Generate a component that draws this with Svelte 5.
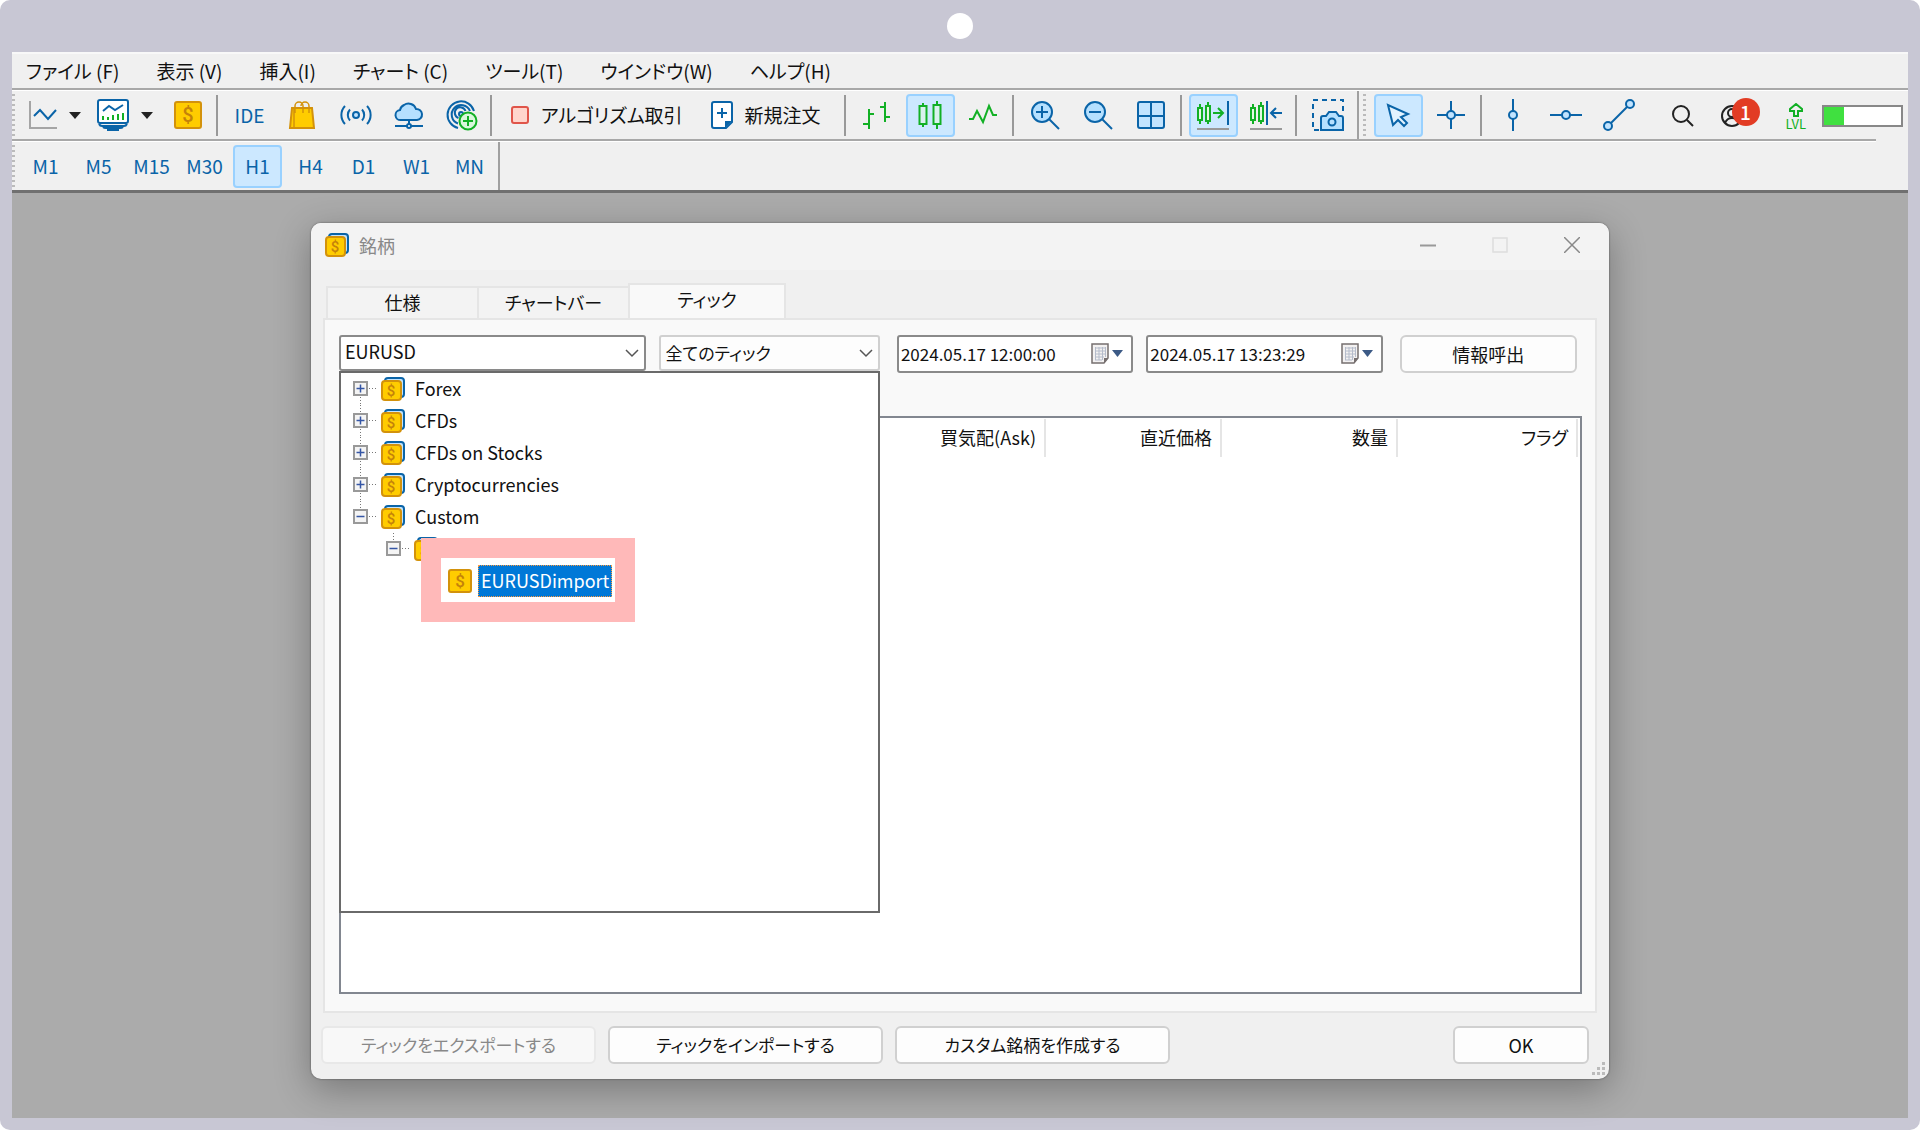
<script>
	// --- Menus and toolbars ---
	const menus = [
		'ファイル (F)',
		'表示 (V)',
		'挿入(I)',
		'チャート (C)',
		'ツール(T)',
		'ウインドウ(W)',
		'ヘルプ(H)'
	];

	const services = [
		{ icon: 'bag', label: 'Market' },
		{ icon: 'signal', label: 'Signals' },
		{ icon: 'cloud', label: 'VPS' },
		{ icon: 'radar', label: 'Copy' }
	];

	const chartGroups = [
		[
			{ icon: 'bars', label: 'Bar chart' },
			{ icon: 'candles', label: 'Candlesticks', active: true },
			{ icon: 'line', label: 'Line chart' }
		],
		[
			{ icon: 'zoomin', label: 'Zoom in' },
			{ icon: 'zoomout', label: 'Zoom out' },
			{ icon: 'tile', label: 'Tile windows' }
		],
		[
			{ icon: 'scroll', label: 'Auto scroll', active: true },
			{ icon: 'shift', label: 'Chart shift' }
		],
		[{ icon: 'camera', label: 'Screenshot' }]
	];

	const pointers = [
		{ icon: 'cursor', label: 'Cursor', active: true },
		{ icon: 'cross', label: 'Crosshair' }
	];

	const lines = [
		{ icon: 'vline', label: 'Vertical line' },
		{ icon: 'hline', label: 'Horizontal line' },
		{ icon: 'trend', label: 'Trend line' }
	];

	const periods = ['M1', 'M5', 'M15', 'M30', 'H1', 'H4', 'D1', 'W1', 'MN'];
	let period = 'H1';
	const level = 26;

	// --- Symbols dialog ---
	const tabs = ['仕様', 'チャートバー', 'ティック'];
	let tab = 'ティック';

	const tree = ['Forex', 'CFDs', 'CFDs on Stocks', 'Cryptocurrencies'];
	const columns = ['買気配(Ask)', '直近価格', '数量', 'フラグ'];

	let from = '2024.05.17 12:00:00';
	let to = '2024.05.17 13:23:29';
</script>

{#snippet coin()}
	<svg class="coin" width="24" height="24" viewBox="0 0 24 24">
		<rect x="1" y="1" width="22" height="22" rx="2" fill="#fc0" stroke="#d3920b" stroke-width="2" />
		<text x="12" y="18" text-anchor="middle" font-size="17">$</text>
	</svg>
{/snippet}

{#snippet coins()}
	<svg class="coin" width="24" height="24" viewBox="0 0 24 24">
		<rect x="4" y="1" width="19" height="19" rx="3" fill="#c2e4ff" stroke="#0a64a8" stroke-width="2" />
		<rect x="1" y="4" width="19" height="19" rx="3" fill="#fc0" stroke="#d3920b" stroke-width="2" />
		<text x="10" y="19" text-anchor="middle" font-size="15">$</text>
	</svg>
{/snippet}

{#snippet caret()}
	<svg width="12" height="7" viewBox="0 0 12 7"><path d="M0 0h12L6 7z" fill="#222" /></svg>
{/snippet}

{#snippet chevron()}
	<svg class="chevron" width="14" height="9" viewBox="0 0 14 9">
		<path d="M1 1l6 6 6-6" fill="none" stroke="#555" stroke-width="1.5" />
	</svg>
{/snippet}

{#snippet calendar()}
	<svg width="32" height="24" viewBox="0 0 32 24">
		<path d="M1 2h16v14l-4 5H1z" fill="#f3f1f1" stroke="#766f6f" stroke-width="1.5" />
		<path d="M4 6h11M4 9h11M4 12h11M4 15h9M4 18h7M4.500 5v13M8 5v13M11.500 5v13M14.500 5v10" stroke="#b5bccb" />
		<path d="M17 16h-4v5z" fill="#766f6f" />
		<path d="M21 8h11l-5.500 7z" fill="#3c5a86" />
	</svg>
{/snippet}

{#snippet toggle(open)}
	<svg class="toggle" width="26" height="32" viewBox="0 0 26 32">
		<path d="M7.500 0v32M16 15.500h9" stroke="#777" stroke-width="1" stroke-dasharray="1 2" />
		<rect x="1" y="9" width="13" height="13" fill="#f4f4f4" stroke="#999" stroke-width="2" />
		<path d={open ? 'M3.500 15.500h8' : 'M3.500 15.500h8M7.500 11.500v8'} stroke="#3556a5" stroke-width="1.5" />
	</svg>
{/snippet}

{#snippet icon(name)}
	<svg class="icon" width="32" height="32" viewBox="0 0 32 32">
		{#if name === 'bag'}
			<path d="M5 9h20l2 20H3z" fill="#fc0" stroke="#d3920b" stroke-width="2" />
			<path d="M8 14V7a4 4 0 0 1 8 0v7M14 7a4 4 0 0 1 8 0v7M7 10v18" stroke="#d3920b" stroke-width="1.500" />
		{:else if name === 'signal'}
			<circle cx="16" cy="16" r="3" fill="#c2e4ff" />
			<path d="M10 10.500a8 8 0 0 0 0 11M22 10.500a8 8 0 0 1 0 11M5 7a13 13 0 0 0 0 18M27 7a13 13 0 0 1 0 18" />
		{:else if name === 'cloud'}
			<path d="M8 21a5 5 0 0 1-1-10 7 7 0 0 1 4-5 8 8 0 0 1 12 4 5.500 5.500 0 0 1 1 11z" fill="#b5e0ff" />
			<path d="M16 21v5M2 27h28" />
			<circle cx="16" cy="27" r="2" fill="#fff" />
		{:else if name === 'radar'}
			<circle cx="15" cy="15" r="2" fill="#c2e4ff" />
			<path d="M28 12A13.500 13.500 0 1 0 12 29M24 12a9.500 9.500 0 1 0-12 12.500M19.500 12a5.500 5.500 0 1 0-7 7" />
			<circle cx="22" cy="22" r="8.500" class="green" fill="#d9f7dc" />
			<path class="green" d="M17 22h10M22 17v10" />
		{:else if name === 'bars'}
			<path class="green" d="M8 10v20M2 25h6M8 15h5M24 3v20M19 8h5M24 18h5" />
		{:else if name === 'candles'}
			<path class="green" d="M9 4v24M23 2v28" />
			<path class="green" d="M5.500 7h7v18h-7zM19.500 6h7v19h-7z" fill="#d9f2ee" />
		{:else if name === 'line'}
			<path class="green" d="M2 20h4l4-8 6 11 6-16 4 9h4" />
		{:else if name === 'zoomin' || name === 'zoomout'}
			<circle cx="13" cy="13" r="10" fill="#b5e0ff" />
			<path d={name === 'zoomin' ? 'M7 13h12M13 7v12' : 'M7 13h12'} />
			<path d="M20 20l10 10" />
		{:else if name === 'tile'}
			<rect x="3" y="3" width="26" height="26" rx="2" fill="#c2e4ff" />
			<path d="M16 3v26M3 17h26" />
		{:else if name === 'scroll' || name === 'shift'}
			<path class="green" d="M3 5v20M11 3v22" />
			<path class="green" d="M1 9h4v12H1zM9 7h4v15H9z" fill="#e3f8e3" />
			<path d="M0 30h32" stroke="#999" />
			{#if name === 'scroll'}
				<path class="green" d="M16 14h10M21 9l5 5-5 5" />
				<path d="M31 2v24" />
			{:else}
				<path d="M17 2v24M21 14h11M26 9l-5 5 5 5" />
			{/if}
		{:else if name === 'camera'}
			<path d="M31 12V1H1v30h6" stroke-dasharray="5 4" />
			<path d="M9 19q0-2 2-2h3l3-4h7l3 4h2q2 0 2 2v12H9z" fill="#b5e0ff" />
			<circle cx="20" cy="23" r="3.500" />
		{:else if name === 'cursor'}
			<path d="M6 6l5 20 5-5 6 6 3-3-6-6 7-3z" fill="#e3f3ff" />
		{:else if name === 'cross'}
			<path d="M2 16h10M20 16h10M16 2v10M16 20v10" />
			<circle cx="16" cy="16" r="4" fill="#c2e4ff" />
		{:else if name === 'vline'}
			<path d="M16 0v32" />
			<circle cx="16" cy="16" r="4" fill="#c2e4ff" />
		{:else if name === 'hline'}
			<path d="M0 16h32" />
			<circle cx="16" cy="16" r="4" fill="#c2e4ff" />
		{:else if name === 'trend'}
			<path d="M6 26L26 6" />
			<circle cx="5" cy="27" r="4" fill="#c2e4ff" />
			<circle cx="27" cy="5" r="4" fill="#c2e4ff" />
		{/if}
	</svg>
{/snippet}

{#snippet tool(item)}
	<button class="tool" class:active={item.active} aria-label={item.label}>
		{@render icon(item.icon)}
	</button>
{/snippet}

<div class="frame">
	<div class="frame-top"><span class="lens"></span></div>

	<div class="terminal">
		<nav class="menubar">
			{#each menus as menu}
				<button class="menu">{menu}</button>
			{/each}
		</nav>
		<div class="rule"></div>

		<div class="toolbar">
			<span class="grip"></span>
			<button class="drop" aria-label="New chart">
				<svg width="28" height="28" viewBox="0 0 28 28" fill="none" stroke-width="2">
					<path d="M1 0v27h27" stroke="#a5a5a5" />
					<path d="M5 15l6-6 8 9 8-9" stroke="#0a64a8" />
				</svg>
				{@render caret()}
			</button>
			<button class="drop" aria-label="Profiles">
				<svg width="32" height="32" viewBox="0 0 32 32" fill="none" stroke="#0a64a8" stroke-width="2">
					<rect x="1" y="1" width="30" height="23" rx="2" fill="#fff" />
					<path d="M2 25q1 2 3 2h22q2 0 3-2M6 28q1 1 3 1h14q2 0 3-1M10 31h12" />
					<path d="M6 12l6-5 6 4 8-5" />
					<path d="M6 21v-4M11 21v-3M16 21v-5M21 21v-6M26 21v-7" stroke="#12b025" />
				</svg>
				{@render caret()}
			</button>
			<button class="tool" aria-label="Symbols">
				<svg class="coin" width="28" height="28" viewBox="0 0 28 28">
					<rect x="1" y="1" width="26" height="26" rx="2" fill="#fc0" stroke="#d3920b" stroke-width="2" />
					<text x="14" y="21" text-anchor="middle" font-size="20">$</text>
				</svg>
			</button>
			<span class="sep"></span>
			<button class="tool">IDE</button>
			{#each services as item}
				{@render tool(item)}
			{/each}
			<span class="sep"></span>
			<button class="wide">
				<svg width="18" height="18" viewBox="0 0 18 18">
					<rect x="1" y="1" width="16" height="16" rx="2" fill="#ffd5cc" stroke="#e0554a" stroke-width="2" />
				</svg>
				アルゴリズム取引
			</button>
			<button class="wide">
				<svg width="22" height="28" viewBox="0 0 22 28">
					<path d="M3 1h16q2 0 2 2v18l-6 6H3q-2 0-2-2V3q0-2 2-2z" fill="#fff" stroke="#0a64a8" stroke-width="2" />
					<path d="M14 27v-7h7z" fill="#0a64a8" />
					<path d="M11 7v10M6 12h10" stroke="#0a64a8" stroke-width="2" />
				</svg>
				新規注文
			</button>
			{#each chartGroups as group}
				<span class="sep"></span>
				{#each group as item}
					{@render tool(item)}
				{/each}
			{/each}
			<span class="edge"></span>
			<span class="grip"></span>
			{#each pointers as item}
				{@render tool(item)}
			{/each}
			<span class="sep"></span>
			{#each lines as item}
				{@render tool(item)}
			{/each}

			<div class="status">
				<button class="plain" aria-label="Search">
					<svg width="22" height="22" viewBox="0 0 22 22" fill="none" stroke="#222" stroke-width="2">
						<circle cx="9" cy="9" r="8" />
						<path d="M15 15l6 6" />
					</svg>
				</button>
				<button class="plain account" aria-label="Account">
					<svg width="24" height="24" viewBox="0 0 24 24" fill="none" stroke="#222" stroke-width="2">
						<circle cx="12" cy="12" r="10" />
						<circle cx="12" cy="9" r="4" />
						<path d="M5 19q2-5 7-5t7 5" />
					</svg>
					<span class="badge">1</span>
				</button>
				<div class="lvl">
					<svg width="14" height="14" viewBox="0 0 14 14">
						<path d="M5 13V8H1V6l6-5 6 5v2H9v5z" fill="none" stroke="#12b025" stroke-width="2" />
					</svg>
					<span>LVL</span>
				</div>
				<div class="meter"><div class="meter-fill" style="width: {level}%"></div></div>
			</div>
		</div>
		<div class="rule short"></div>

		<div class="periods">
			<span class="grip"></span>
			{#each periods as item}
				<button class="tool" class:active={item === period} onclick={() => (period = item)}>{item}</button>
			{/each}
			<span class="edge"></span>
		</div>

		<main class="desktop">
			<section class="dialog">
				<header class="titlebar">
					{@render coins()}
					<span class="title">銘柄</span>
					<button class="window-button" aria-label="Minimize">
						<svg width="16" height="16" viewBox="0 0 16 16"><path d="M0 8.500h16" stroke="#999" stroke-width="2" /></svg>
					</button>
					<button class="window-button" aria-label="Maximize" disabled>
						<svg width="16" height="16" viewBox="0 0 16 16">
							<rect x="1" y="1" width="14" height="14" fill="none" stroke="#ddd" stroke-width="1.500" />
						</svg>
					</button>
					<button class="window-button" aria-label="Close">
						<svg width="16" height="16" viewBox="0 0 16 16"><path d="M0 0l16 16M16 0L0 16" stroke="#888" stroke-width="1.500" /></svg>
					</button>
				</header>

				<div class="tabs" role="tablist">
					{#each tabs as item}
						<button class="tab" role="tab" aria-selected={item === tab} onclick={() => (tab = item)}>{item}</button>
					{/each}
				</div>

				<div class="panel">
					<div class="controls">
						<div class="combos">
							<div class="combo">
								<select class="dark" aria-label="Symbol"><option>EURUSD</option></select>
								{@render chevron()}
							</div>
							<div class="combo">
								<select aria-label="Tick type"><option>全てのティック</option></select>
								{@render chevron()}
							</div>

							<div class="popup">
								<ul class="tree">
									{#each tree as node}
										<li class="node">{@render toggle(false)}{@render coins()}<span class="name">{node}</span></li>
									{/each}
									<li class="node last">{@render toggle(true)}{@render coins()}<span class="name">Custom</span></li>
									<li class="node level-2 last">{@render toggle(true)}{@render coins()}</li>
									<li class="node level-3">{@render coin()}<span class="name selected">EURUSDimport</span></li>
								</ul>
								<div class="highlight"></div>
							</div>
						</div>
						<div class="dates">
							<div class="date">
								<input type="text" aria-label="From" bind:value={from} />
								<button class="plain" aria-label="Pick start date">{@render calendar()}</button>
							</div>
							<div class="date">
								<input type="text" aria-label="To" bind:value={to} />
								<button class="plain" aria-label="Pick end date">{@render calendar()}</button>
							</div>
						</div>
						<button class="push">情報呼出</button>
					</div>

					<div class="list">
						<table>
							<thead>
								<tr>
									<td></td>
									{#each columns as column}
										<th>{column}</th>
									{/each}
								</tr>
							</thead>
						</table>
					</div>
				</div>

				<footer class="actions">
					<button class="push action" disabled>ティックをエクスポートする</button>
					<button class="push action">ティックをインポートする</button>
					<button class="push action">カスタム銘柄を作成する</button>
					<button class="push ok">OK</button>
				</footer>
				<svg class="resize" width="14" height="14" viewBox="0 0 14 14">
					<path d="M10 0h3v3h-3zM5 5h3v3H5zM10 5h3v3h-3zM0 10h3v3H0zM5 10h3v3H5zM10 10h3v3h-3z" fill="#bbb" />
				</svg>
			</section>
		</main>
	</div>
</div>

<style>
	:global(body) {
		margin: 0;
		background: #fff;
	}

	.frame {
		--blue: #0a64a8;
		--green: #12b025;
		--line: #a0a0a0;
		--face: #f0f0f0;

		box-sizing: border-box;
		min-height: 100vh;
		display: flex;
		flex-direction: column;
		padding: 0 12px 12px;
		border-radius: 10px;
		background: #c8c7d4;
		font-family: 'Noto Sans CJK JP', 'Noto Sans', sans-serif;
		font-feature-settings: 'palt';
		font-size: 18px;
		line-height: 24px;
		color: #111;
	}

	.frame *,
	.frame *::after {
		box-sizing: border-box;
	}

	button,
	select,
	input {
		margin: 0;
		padding: 0;
		border: 0;
		background: none;
		font: inherit;
		font-feature-settings: inherit;
		color: inherit;
	}

	svg {
		display: block;
		flex: none;
	}

	.coin text {
		font-family: Roboto, sans-serif;
		font-weight: 500;
		fill: #c4820a;
	}

	.frame-top {
		height: 52px;
		display: flex;
		justify-content: center;
		align-items: center;
	}

	.lens {
		width: 26px;
		height: 26px;
		border-radius: 50%;
		background: #fff;
	}

	.terminal {
		flex: 1;
		display: flex;
		flex-direction: column;
		background: var(--face);
	}

	/* --- Menu bar --- */
	.menubar {
		height: 36px;
		display: flex;
		align-items: center;
		gap: 37px;
		padding: 0 14px;
		border-top: 2px solid #f8f8f8;
		font-size: 19px;
	}

	.menu {
		white-space: nowrap;
	}

	.rule {
		height: 3px;
		border-top: 2px solid #a8a8a8;
		background: #fff;
	}

	.rule.short {
		margin-right: 32px;
	}

	/* --- Toolbars --- */
	.toolbar,
	.periods {
		height: 48px;
		display: flex;
		align-items: center;
		gap: 4px;
	}

	.toolbar {
		font-size: 19px;
	}

	.grip {
		flex: none;
		width: 3px;
		height: 42px;
		margin-right: 4px;
		background: repeating-linear-gradient(#bbb 0 2px, transparent 2px 5px);
	}

	.periods .grip {
		margin-right: 2px;
	}

	.sep {
		flex: none;
		width: 2px;
		height: 41px;
		margin-right: 3px;
		background: #999;
	}

	.edge {
		flex: none;
		align-self: stretch;
		width: 2px;
		background: var(--line);
	}

	.tool {
		flex: none;
		width: 49px;
		height: 43px;
		display: flex;
		justify-content: center;
		align-items: center;
		border: 2px solid transparent;
		border-radius: 4px;
		font-size: 19px;
		color: var(--blue);
	}

	.tool.active {
		border-color: #99d1ff;
		background: #cce8ff;
	}

	.drop {
		display: flex;
		align-items: center;
		gap: 12px;
		padding: 0 6px;
	}

	.wide {
		min-width: 141px;
		display: flex;
		align-items: center;
		gap: 12px;
		padding: 0 12px;
		white-space: nowrap;
	}

	.icon {
		fill: none;
		stroke: var(--blue);
		stroke-width: 2;
	}

	.green {
		stroke: var(--green);
	}

	.status {
		display: flex;
		align-items: center;
		gap: 26px;
		margin-left: auto;
		padding: 2px 5px 0 0;
	}

	.plain {
		flex: none;
	}

	.account {
		position: relative;
		width: 40px;
	}

	.badge {
		position: absolute;
		top: -6px;
		right: 0;
		width: 28px;
		height: 28px;
		border-radius: 50%;
		background: #e23c24;
		font-weight: 500;
		line-height: 28px;
		color: #fff;
	}

	.lvl {
		display: flex;
		flex-direction: column;
		align-items: center;
		font-size: 13px;
		line-height: 13px;
		color: var(--green);
	}

	.meter {
		width: 81px;
		height: 22px;
		margin-left: -10px;
		border: 2px solid #888;
		background: #fff;
	}

	.meter-fill {
		height: 100%;
		background: #40e040;
	}

	/* --- Dialog --- */
	.desktop {
		flex: 1;
		display: flex;
		padding: 30px 299px 39px;
		border-top: 3px solid #707070;
		background: #ababab;
	}

	.dialog {
		position: relative;
		flex: 1;
		display: flex;
		flex-direction: column;
		padding: 0 12px 15px;
		border-radius: 10px;
		background: var(--face);
		box-shadow:
			0 0 2px rgba(0, 0, 0, 0.5),
			0 10px 36px rgba(0, 0, 0, 0.3);
	}

	.titlebar {
		height: 47px;
		display: flex;
		align-items: center;
		margin: 0 -12px;
		padding: 0 1px 4px 14px;
		border-radius: 10px 10px 0 0;
		background: #f3f3f3;
	}

	.title {
		flex: 1;
		padding-left: 10px;
		color: #888;
	}

	.window-button {
		width: 72px;
		display: flex;
		justify-content: center;
	}

	.tabs {
		display: flex;
		align-items: flex-end;
		padding: 13px 3px 0;
	}

	.tab {
		width: 151px;
		height: 32px;
		padding-bottom: 3px;
		border: 2px solid #e5e5e5;
		border-width: 2px 0 0 2px;
		background: #f3f3f3;
	}

	.tab[aria-selected='true'] {
		width: 158px;
		height: 37px;
		margin-bottom: -2px;
		padding-bottom: 8px;
		border-width: 2px 2px 0;
		background: #f9f9f9;
	}

	.panel {
		flex: 1;
		display: flex;
		flex-direction: column;
		gap: 43px;
		padding: 15px 13px 17px 14px;
		border: 2px solid #e5e5e5;
		background: #f9f9f9;
	}

	.controls {
		display: grid;
		grid-template-columns: 540fr 485fr 177fr;
		gap: 17px;
		align-items: start;
		padding-right: 5px;
	}

	.combos {
		position: relative;
		display: grid;
		grid-template-columns: 306fr 221fr;
		gap: 13px;
	}

	.combo {
		display: grid;
		align-items: center;
	}

	.combo > :global(*) {
		grid-area: 1 / 1;
	}

	select {
		appearance: none;
		width: 100%;
		height: 36px;
		padding: 0 5px;
		border: 2px solid #d0d0d0;
		border-radius: 3px;
		background: #fdfdfd;
		font-size: 17px;
	}

	select.dark {
		padding: 0 4px 4px;
		border-color: #8a8a8a;
		background: #fff;
		font-size: 18px;
	}

	.chevron {
		justify-self: end;
		margin-right: 7px;
		pointer-events: none;
	}

	.popup {
		position: absolute;
		top: 100%;
		left: 0;
		right: 0;
		z-index: 1;
		height: 542px;
		border: 2px solid #6a6a6a;
		background: #fff;
	}

	.tree {
		margin: 0;
		padding: 0 0 0 12px;
		list-style: none;
	}

	.node {
		height: 32px;
		display: flex;
		align-items: center;
		gap: 2px;
	}

	.node:first-child :global(.toggle) {
		clip-path: inset(8px 0 0 0);
	}

	.node.last :global(.toggle) {
		clip-path: inset(0 0 9px 0);
	}

	.level-2 {
		padding-left: 33px;
	}

	.level-3 {
		padding-left: 95px;
	}

	.name {
		height: 32px;
		margin-left: 4px;
		padding: 0 4px;
		line-height: 30px;
	}

	.name.selected {
		padding: 0 2px;
		border: 1px dotted #ff9a3c;
		background: #0078d7;
		line-height: 28px;
		color: #fff;
	}

	/* Marks the imported symbol in the tree */
	.highlight {
		position: absolute;
		top: 165px;
		left: 80px;
		width: 214px;
		height: 84px;
		border: 20px solid #ffb9b9;
	}

	.dates {
		display: grid;
		grid-template-columns: 1fr 1fr;
		gap: 13px;
	}

	.date {
		height: 38px;
		display: flex;
		align-items: center;
		padding: 0 8px 0 2px;
		border: 2px solid #8a8a8a;
		border-radius: 3px;
		background: #fff;
	}

	.date input {
		flex: 1;
		min-width: 0;
		font-size: 17px;
	}

	.push {
		height: 38px;
		border: 2px solid #d0d0d0;
		border-radius: 6px;
		background: #fdfdfd;
		white-space: nowrap;
	}

	.push:disabled {
		border-color: #e8e8e8;
		background: #f8f8f8;
		color: #888;
	}

	.list {
		flex: 1;
		min-height: 320px;
		padding: 1px 2px;
		border: 2px solid #828790;
		background: #fff;
	}

	table {
		width: 100%;
		table-layout: fixed;
		border-collapse: collapse;
	}

	th {
		width: 176px;
		height: 38px;
		padding: 0 8px 3px;
		border-right: 2px solid #e5e5e5;
		font-weight: 400;
		text-align: right;
	}

	th:last-child {
		width: 180px;
	}

	.actions {
		display: flex;
		gap: 12px;
		margin-left: -2px;
		padding: 13px 8px 0 0;
	}

	.action {
		width: 275px;
		font-size: 17px;
	}

	.ok {
		width: 136px;
		margin-left: auto;
	}

	.resize {
		position: absolute;
		right: 3px;
		bottom: 3px;
	}
</style>
